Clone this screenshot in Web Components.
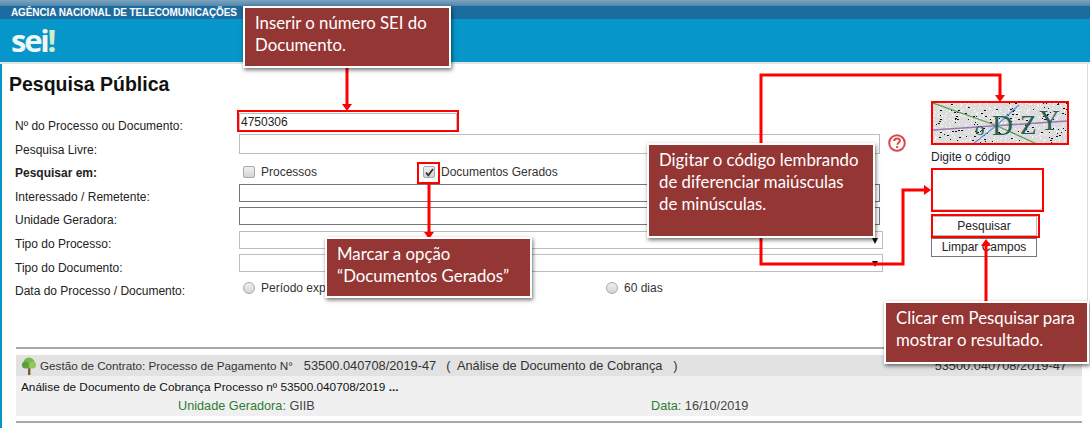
<!DOCTYPE html>
<html lang="pt">
<head>
<meta charset="utf-8">
<title>Pesquisa Pública</title>
<style>
  html, body { margin: 0; padding: 0; background: #fff; }
  body { width: 1090px; height: 428px; overflow: hidden; position: relative; font-family: "Liberation Sans", Arial, sans-serif; }
</style>
</head>
<body>
<sei-header></sei-header>
<sei-page>
  <sei-form>
    <sei-field label="Nº do Processo ou Documento:"><sei-input value="4750306" width="218"></sei-input></sei-field>
    <sei-field label="Pesquisa Livre:"><sei-input tall width="641"></sei-input><sei-help></sei-help></sei-field>
    <sei-field label="Pesquisar em:" strong>
      <sei-choice type="checkbox" shift="6" width="180" text="Processos"></sei-choice>
      <sei-choice type="checkbox" shift="6" checked width="200" text="Documentos Gerados"></sei-choice>
    </sei-field>
    <sei-field label="Interessado / Remetente:"><sei-input dark width="641"></sei-input></sei-field>
    <sei-field label="Unidade Geradora:"><sei-input dark width="641"></sei-input></sei-field>
    <sei-field label="Tipo do Processo:"><sei-input select width="644"></sei-input></sei-field>
    <sei-field label="Tipo do Documento:"><sei-input select width="644"></sei-input></sei-field>
    <sei-field label="Data do Processo / Documento:">
      <sei-choice type="radio" shift="2" width="363" text="Período exp"></sei-choice>
      <sei-choice type="radio" shift="2" width="80" text="60 dias"></sei-choice>
    </sei-field>
  </sei-form>
  <sei-side></sei-side>
</sei-page>
<sei-result></sei-result>
<sei-notes></sei-notes>

<script>
// cabecalho azul com o logo
class SeiHeader extends HTMLElement {
  constructor() {
    super();
    this.attachShadow({mode: "open"});
    this.shadowRoot.innerHTML = `
    <style>
      :host { display: block; height: 64px; }
      .top { height: 6px; background: linear-gradient(#7fa3bd, #4f86ad); }
      .org { height: 13px; background: #1c6c9f; color: #fff; font: bold 10px/13px "Liberation Sans", sans-serif; padding-left: 11px; letter-spacing: -0.1px; }
      .bar { height: 43px; background: #0796c9; border-bottom: 2px solid #e4e4e4; display: flex; align-items: center; padding-left: 11px; }
      .logo { color: #eef8f4; font: bold 31px/40px "Open Sans", sans-serif; letter-spacing: -2.2px; margin-top: -2px; }
      .logo b { color: #d6ecc4; font-weight: bold; }
    </style>
    <div class="top"></div>
    <div class="org">AGÊNCIA NACIONAL DE TELECOMUNICAÇÕES</div>
    <div class="bar"><span class="logo">sei<b>!</b></span></div>`;
  }
}

class SeiPage extends HTMLElement {
  constructor() {
    super();
    this.attachShadow({mode: "open"});
    this.shadowRoot.innerHTML = `
    <style>
      :host { display: block; height: 283px; box-sizing: border-box; border-left: 2px solid #0796c9; border-right: 1px solid #ddd; margin-right: 2px; }
      h1 { margin: 0; height: 46px; padding: 9px 0 0 7px; box-sizing: border-box; font: bold 19.5px/22px "Liberation Sans", sans-serif; color: #111; }
      .cols { display: flex; }
      .main { width: 928px; }
    </style>
    <h1>Pesquisa Pública</h1>
    <div class="cols">
      <div class="main"><slot></slot></div>
      <slot name="side"></slot>
    </div>`;
  }
  connectedCallback() {
    const side = this.querySelector("sei-side");
    if (side) side.slot = "side";
  }
}

class SeiForm extends HTMLElement {
  constructor() {
    super();
    this.attachShadow({mode: "open"});
    this.shadowRoot.innerHTML = `
    <style>:host { display: block; }</style>
    <slot></slot>`;
  }
}

class SeiField extends HTMLElement {
  constructor() {
    super();
    this.attachShadow({mode: "open"});
    const strong = this.hasAttribute("strong");
    this.shadowRoot.innerHTML = `
    <style>
      :host { display: grid; grid-template-columns: 237px 1fr; height: 23.6px; }
      label { padding: 9px 0 0 13px; font: ${strong ? "bold" : "normal"} 12px/14px "Liberation Sans", sans-serif; color: #222; white-space: nowrap; }
      .ctl { display: flex; align-items: center; height: 23.6px; }
    </style>
    <label>${this.getAttribute("label")}</label>
    <div class="ctl"><slot></slot></div>`;
  }
}

class SeiInput extends HTMLElement {
  constructor() {
    super();
    this.attachShadow({mode: "open"});
    const dark = this.hasAttribute("dark");
    const select = this.hasAttribute("select");
    const tall = this.hasAttribute("tall");
    const w = this.getAttribute("width");
    this.shadowRoot.innerHTML = `
    <style>
      :host { display: block; width: ${w}px; height: ${tall ? 20 : 18}px; margin-top: ${tall ? -2 : 0}px; box-sizing: border-box; border: 1px solid ${dark ? "#767676" : "#bdbdbd"}; background: #fff; position: relative; font: 12px/16px "Liberation Sans", sans-serif; color: #222; padding-left: 1px; }
      .arrow { position: absolute; right: 4px; top: 6px; width: 0; height: 0; border: 3.5px solid transparent; border-top: 6px solid #111; border-bottom: 0; }
    </style>
    ${this.getAttribute("value") || ""}${select ? '<span class="arrow"></span>' : ""}`;
  }
}

class SeiHelp extends HTMLElement {
  constructor() {
    super();
    this.attachShadow({mode: "open"});
    this.shadowRoot.innerHTML = `
    <style>
      :host { display: block; width: 18px; height: 18px; margin: -5px 0 0 8px; }
      svg { display: block; }
    </style>
    <svg width="18" height="18" viewBox="0 0 18 18">
      <circle cx="9" cy="9" r="7.8" fill="#fff" stroke="#d9484a" stroke-width="2"/>
      <path d="M6.2 7.1c0-1.7 1.2-2.6 2.9-2.6 1.6 0 2.8.9 2.8 2.3 0 1.9-2.6 2-2.6 4" fill="none" stroke="#d9484a" stroke-width="2"/>
      <rect x="8.2" y="12" width="2" height="2" fill="#d9484a"/>
    </svg>`;
  }
}

class SeiChoice extends HTMLElement {
  constructor() {
    super();
    this.attachShadow({mode: "open"});
    const radio = this.getAttribute("type") === "radio";
    const checked = this.hasAttribute("checked");
    this.shadowRoot.innerHTML = `
    <style>
      :host { display: flex; align-items: center; width: ${this.getAttribute("width")}px; height: 20px; margin-top: ${this.getAttribute("shift")}px; padding-left: 4px; box-sizing: border-box; font: 12px/14px "Liberation Sans", sans-serif; color: #333; white-space: nowrap; }
      .box { width: 12px; height: 12px; box-sizing: border-box; margin-right: 6px; border: 1px solid #a8a8a8; background: linear-gradient(#f0f0f0, #d4d4d4); border-radius: ${radio ? "50%" : "2px"}; position: relative; }
      svg { position: absolute; left: 1px; top: 1px; }
    </style>
    <span class="box">${checked ? '<svg width="9" height="9" viewBox="0 0 9 9"><path d="M1 4.6l2.4 2.8L8 1" fill="none" stroke="#333" stroke-width="1.8"/></svg>' : ""}</span>
    <span>${this.getAttribute("text")}</span>`;
  }
}

// captcha, botoes e campo do codigo
class SeiSide extends HTMLElement {
  constructor() {
    super();
    this.attachShadow({mode: "open"});
    let dots = "";
    let seed = 7;
    const next = (n) => { seed = (seed * 137 + 11) % 2039; return seed % n; };
    for (let i = 0; i < 520; i++) {
      dots += `<rect x="${next(136)}" y="${next(42)}" width="1" height="1" fill="#fff"/>`;
    }
    for (let i = 0; i < 130; i++) {
      dots += `<rect x="${next(136)}" y="${next(42)}" width="${1 + next(2)}" height="1" fill="#111"/>`;
    }
    this.shadowRoot.innerHTML = `
    <style>
      :host { display: block; width: 140px; margin-top: -8px; padding-left: 1px; font: 12px/14px "Liberation Sans", sans-serif; }
      svg { display: block; margin: 1px 0 0 2px; }
      .cap { font-size: 12px; color: #223; margin: 6px 0 5px 0; height: 14px; }
      .code { width: 110px; height: 41px; box-sizing: border-box; border-bottom: 1px solid #ccc; background: #fff; }
      .btn { display: block; box-sizing: border-box; width: 106px; height: 20px; border: 1px solid #777; background: #fff; color: #222; font: 12px/18px "Liberation Sans", sans-serif; text-align: center; }
      .first { margin-top: 6px; border-color: #bbb; }
      .second { margin-top: 2px; height: 19px; line-height: 17px; }
    </style>
    <svg width="134" height="41" viewBox="0 0 134 41">
      <rect width="134" height="41" fill="#dcdcdc"/>
      ${dots}
      <path d="M0 0L62 22L104 41" stroke="#53a24f" stroke-width="1.2" fill="none"/>
      <path d="M0 27L134 18" stroke="#9a78b0" stroke-width="1.4" fill="none"/>
      <path d="M40 41L64 22L86 2" stroke="#5b93d8" stroke-width="1.2" fill="none"/>
      <g fill="#2b5f55" font-family="Liberation Serif, serif">
        <text x="42" y="32" font-size="19">o</text>
        <text x="59" y="32" font-size="29">D</text>
        <text x="87" y="31" font-size="27">Z</text>
        <text x="106" y="27" font-size="29">Y</text>
      </g>
    </svg>
    <div class="cap">Digite o código</div>
    <div class="code"></div>
    <span class="btn first">Pesquisar</span>
    <span class="btn second">Limpar Campos</span>`;
  }
}

// resultado da pesquisa
class SeiResult extends HTMLElement {
  constructor() {
    super();
    this.attachShadow({mode: "open"});
    this.shadowRoot.innerHTML = `
    <style>
      :host { display: block; height: 81px; box-sizing: border-box; border-left: 2px solid #0796c9; padding: 0 8px 0 14px; font: 12px/14px "Liberation Sans", sans-serif; color: #333; }
      .rule { height: 2px; background: #a8a8a8; }
      .head { margin-top: 6px; height: 21px; background: #e2e2e2; display: flex; align-items: center; white-space: nowrap; }
      .head svg { margin: 0 3px 0 5px; flex: none; }
      .first { font-size: 11.7px; }
      .proc { margin-left: 11px; font-size: 12.8px; }
      .sub { margin-left: 10px; font-size: 12.8px; white-space: pre; }
      .end { margin-left: auto; padding-right: 15px; font-size: 12.8px; }
      .body { height: 40px; background: #f0f0f0; }
      .txt { padding: 4px 0 0 5px; font-size: 11.8px; height: 22px; box-sizing: border-box; color: #111; }
      .meta { display: flex; padding-top: 1px; color: #444; font-size: 12.7px; }
      .meta span:first-child { margin-left: 162px; width: 473px; }
      em { font-style: normal; color: #2e7d32; }
      .low { margin-top: 5px; }
    </style>
    <div class="rule"></div>
    <div class="head">
      <svg width="16" height="18" viewBox="0 0 16 18">
        <rect x="7" y="10" width="2.4" height="8" fill="#7a5a2e"/>
        <circle cx="8" cy="6" r="5.6" fill="#79b84a"/>
        <circle cx="4.5" cy="8" r="3.6" fill="#5d9f3a"/>
        <circle cx="11.5" cy="8" r="3.6" fill="#8fc95a"/>
      </svg>
      <span class="first">Gestão de Contrato: Processo de Pagamento N°</span>
      <span class="proc">53500.040708/2019-47</span>
      <span class="sub">(  Análise de Documento de Cobrança   )</span>
      <span class="end">53500.040708/2019-47</span>
    </div>
    <div class="body">
      <div class="txt">Análise de Documento de Cobrança Processo nº 53500.040708/2019 <b>...</b></div>
      <div class="meta">
        <span><em>Unidade Geradora:</em> GIIB</span>
        <span><em>Data:</em> 16/10/2019</span>
      </div>
    </div>
    <div class="rule low"></div>`;
  }
}

class SeiCallout extends HTMLElement {
  constructor() {
    super();
    this.attachShadow({mode: "open"});
    this.shadowRoot.innerHTML = `
    <style>
      :host { position: absolute; box-sizing: border-box; border: 2px solid #fff; background: #943634; color: #fff; box-shadow: 1px 2px 4px rgba(0,0,0,.55); font: 16.8px/22px Lato, "Open Sans", sans-serif; padding: 4px 10px; white-space: nowrap; }
    </style>
    <slot></slot>`;
  }
}

// marcacoes vermelhas por cima da tela
class SeiNotes extends HTMLElement {
  constructor() {
    super();
    this.attachShadow({mode: "open"});
    const boxes = [[238, 111, 220, 20], [932, 102, 136, 42], [932, 169, 111, 42], [932, 215, 107, 22], [418, 163, 21, 20]];
    const rects = boxes.map(b => `<rect x="${b[0]}" y="${b[1]}" width="${b[2]}" height="${b[3]}" fill="none" stroke="#f00" stroke-width="2"/>`).join("");
    this.shadowRoot.innerHTML = `
    <style>
      :host { position: absolute; left: 0; top: 0; width: 1090px; height: 428px; display: block; pointer-events: none; }
      svg { position: absolute; left: 0; top: 0; }
      .a { left: 243px; top: 6px; width: 208px; height: 62px; }
      .b { left: 647px; top: 143px; width: 228px; height: 95px; }
      .c { left: 325px; top: 237px; width: 207px; height: 61px; }
      .d { left: 884px; top: 301px; width: 205px; height: 63px; }
    </style>
    <svg width="1090" height="428" viewBox="0 0 1090 428">
      ${rects}
      <g fill="none" stroke="#f00" stroke-width="3" stroke-linejoin="miter">
        <path d="M347 66V106"/>
        <path d="M429 183V234"/>
        <path d="M761 145V75H1000V97"/>
        <path d="M761 235V264H903V190H926"/>
        <path d="M986 305V244"/>
      </g>
      <g fill="#f00">
        <path d="M342 104h10l-5 7z"/>
        <path d="M424 232h10l-5 7z"/>
        <path d="M995 95h10l-5 7z"/>
        <path d="M924 185v10l7-5z"/>
        <path d="M981 246h10l-5-7z"/>
      </g>
    </svg>
    <sei-callout class="a">Inserir o número SEI do<br>Documento.</sei-callout>
    <sei-callout class="b">Digitar o código lembrando<br>de diferenciar maiúsculas<br>de minúsculas.</sei-callout>
    <sei-callout class="c">Marcar a opção<br>“Documentos Gerados”</sei-callout>
    <sei-callout class="d">Clicar em Pesquisar para<br>mostrar o resultado.</sei-callout>`;
  }
}

window.customElements.define("sei-header", SeiHeader);
window.customElements.define("sei-page", SeiPage);
window.customElements.define("sei-form", SeiForm);
window.customElements.define("sei-field", SeiField);
window.customElements.define("sei-input", SeiInput);
window.customElements.define("sei-help", SeiHelp);
window.customElements.define("sei-choice", SeiChoice);
window.customElements.define("sei-side", SeiSide);
window.customElements.define("sei-result", SeiResult);
window.customElements.define("sei-callout", SeiCallout);
window.customElements.define("sei-notes", SeiNotes);
</script>
</body>
</html>
